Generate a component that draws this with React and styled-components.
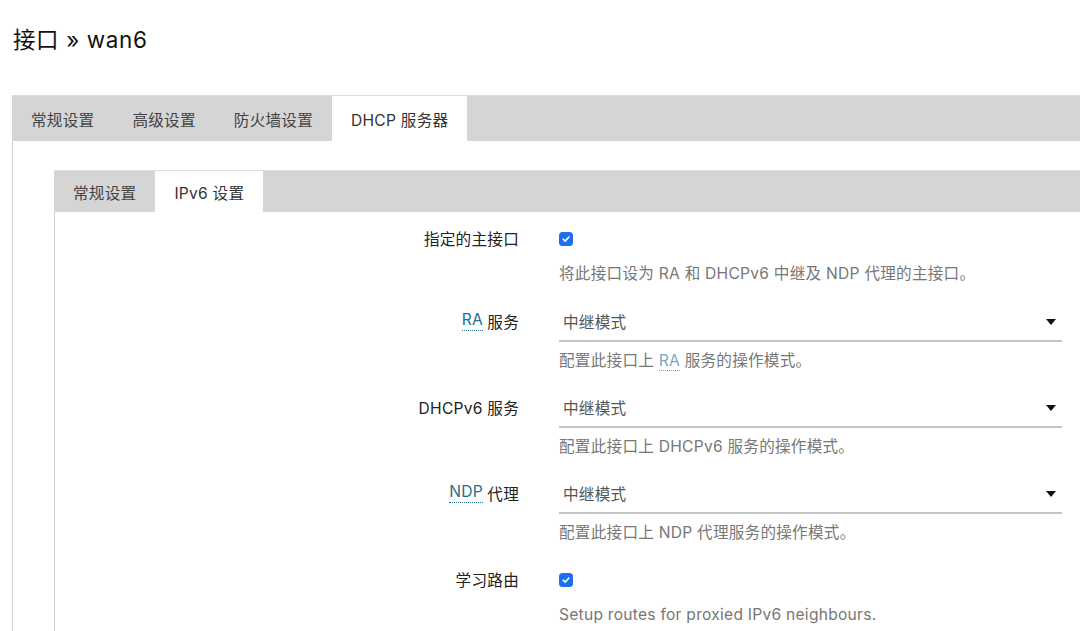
import React from "react";
import styled, { createGlobalStyle } from "styled-components";

const GlobalStyle = createGlobalStyle`
  html, body {
    margin: 0;
    padding: 0;
    background: #ffffff;
    overflow: hidden;
  }
  body {
    font-family: Inter, "Noto Sans CJK SC", sans-serif;
    font-size: 15.6px;
    letter-spacing: 0.25px;
    color: #333;
  }
`;

const Page = styled.div`
  padding-left: 12px;
  width: 1068px;
`;

const Title = styled.h2`
  margin: 0;
  box-sizing: border-box;
  height: 95px;
  padding: 25px 0 0 1px;
  font-size: 22.5px;
  letter-spacing: 0.6px;
  line-height: 30px;
  font-weight: 400;
  color: #111;
`;

const TabBar = styled.div`
  display: flex;
  align-items: stretch;
  height: ${(p) => p.$height}px;
  background: #d5d5d5;
  border-top: 1px solid #dedede;
  box-sizing: border-box;
`;

const Tab = styled.div`
  display: flex;
  align-items: center;
  padding: 0 19px;
  color: ${(p) => (p.$active ? "#333" : "#444")};
  background: ${(p) => (p.$active ? "#ffffff" : "transparent")};
  white-space: nowrap;
`;

const Panel = styled.div`
  border-left: 1px solid #cfcfcf;
  padding: 29px 0 0 41px;
`;

const InnerPanel = styled.div`
  border-left: 1px solid #cfcfcf;
  padding-top: 6px;
  padding-bottom: 20px;
`;

const Row = styled.div`
  display: grid;
  grid-template-columns: 464px 503px;
  column-gap: 40px;
  margin-bottom: ${(p) => p.$after}px;
`;

const Label = styled.div`
  height: 40px;
  display: flex;
  align-items: center;
  justify-content: flex-end;
  gap: 0.28em;
  color: #222;
  white-space: nowrap;
`;

const Field = styled.div`
  display: flex;
  flex-direction: column;
`;

const CheckArea = styled.div`
  height: 40px;
  display: flex;
  align-items: center;
`;

const Checkbox = styled.span`
  width: 14px;
  height: 14px;
  border-radius: 3.5px;
  background: #1c6ef2;
  display: inline-flex;
  align-items: center;
  justify-content: center;
  margin-top: 1px;
`;

const Select = styled.div`
  box-sizing: border-box;
  height: 41px;
  display: flex;
  align-items: center;
  justify-content: space-between;
  padding: 0 6px 0 4px;
  border-bottom: 2px solid #c6c6c6;
  color: #555;
`;

const Arrow = styled.span`
  width: 0;
  height: 0;
  border-left: 5.5px solid transparent;
  border-right: 5.5px solid transparent;
  border-top: 6px solid #111;
  margin-top: 2px;
`;

const Desc = styled.div`
  margin-top: ${(p) => p.$gap}px;
  height: 20px;
  line-height: 20px;
  white-space: nowrap;
  color: #777;
`;

const Abbr = styled.abbr`
  text-decoration: none;
  color: ${(p) => (p.$muted ? "#7aa6bf" : "#236f8e")};
  border-bottom: 1px dotted ${(p) => (p.$muted ? "#7aa6bf" : "#236f8e")};
  line-height: 1.2;
  cursor: help;
`;

const Check = () => (
  <Checkbox>
    <svg width="10" height="10" viewBox="0 0 10 10">
      <path
        d="M2.2 5.2 L4.2 7.1 L7.9 3"
        fill="none"
        stroke="#fff"
        strokeWidth="1.6"
        strokeLinecap="round"
        strokeLinejoin="round"
      />
    </svg>
  </Checkbox>
);

const SelectRow = ({ label, desc }) => (
  <Row $after={16}>
    <Label>{label}</Label>
    <Field>
      <Select>
        <span>中继模式</span>
        <Arrow />
      </Select>
      <Desc $gap={9}>{desc}</Desc>
    </Field>
  </Row>
);

const CheckRow = ({ label, desc }) => (
  <Row $after={17}>
    <Label>{label}</Label>
    <Field>
      <CheckArea>
        <Check />
      </CheckArea>
      <Desc $gap={6}>{desc}</Desc>
    </Field>
  </Row>
);

export default function App() {
  return (
    <>
      <GlobalStyle />
      <Page>
        <Title>接口 » wan6</Title>
        <TabBar $height={46}>
          <Tab>常规设置</Tab>
          <Tab>高级设置</Tab>
          <Tab>防火墙设置</Tab>
          <Tab $active>DHCP 服务器</Tab>
        </TabBar>
        <Panel>
          <TabBar $height={42}>
            <Tab>常规设置</Tab>
            <Tab $active>IPv6 设置</Tab>
          </TabBar>
          <InnerPanel>
            <CheckRow
              label="指定的主接口"
              desc="将此接口设为 RA 和 DHCPv6 中继及 NDP 代理的主接口。"
            />
            <SelectRow
              label={
                <>
                  <Abbr title="Router Advertisement">RA</Abbr>
                  <span>服务</span>
                </>
              }
              desc={
                <>
                  配置此接口上 <Abbr $muted title="Router Advertisement">RA</Abbr> 服务的操作模式。
                </>
              }
            />
            <SelectRow label="DHCPv6 服务" desc="配置此接口上 DHCPv6 服务的操作模式。" />
            <SelectRow
              label={
                <>
                  <Abbr title="Neighbour Discovery Protocol">NDP</Abbr>
                  <span>代理</span>
                </>
              }
              desc="配置此接口上 NDP 代理服务的操作模式。"
            />
            <CheckRow label="学习路由" desc="Setup routes for proxied IPv6 neighbours." />
          </InnerPanel>
        </Panel>
      </Page>
    </>
  );
}
